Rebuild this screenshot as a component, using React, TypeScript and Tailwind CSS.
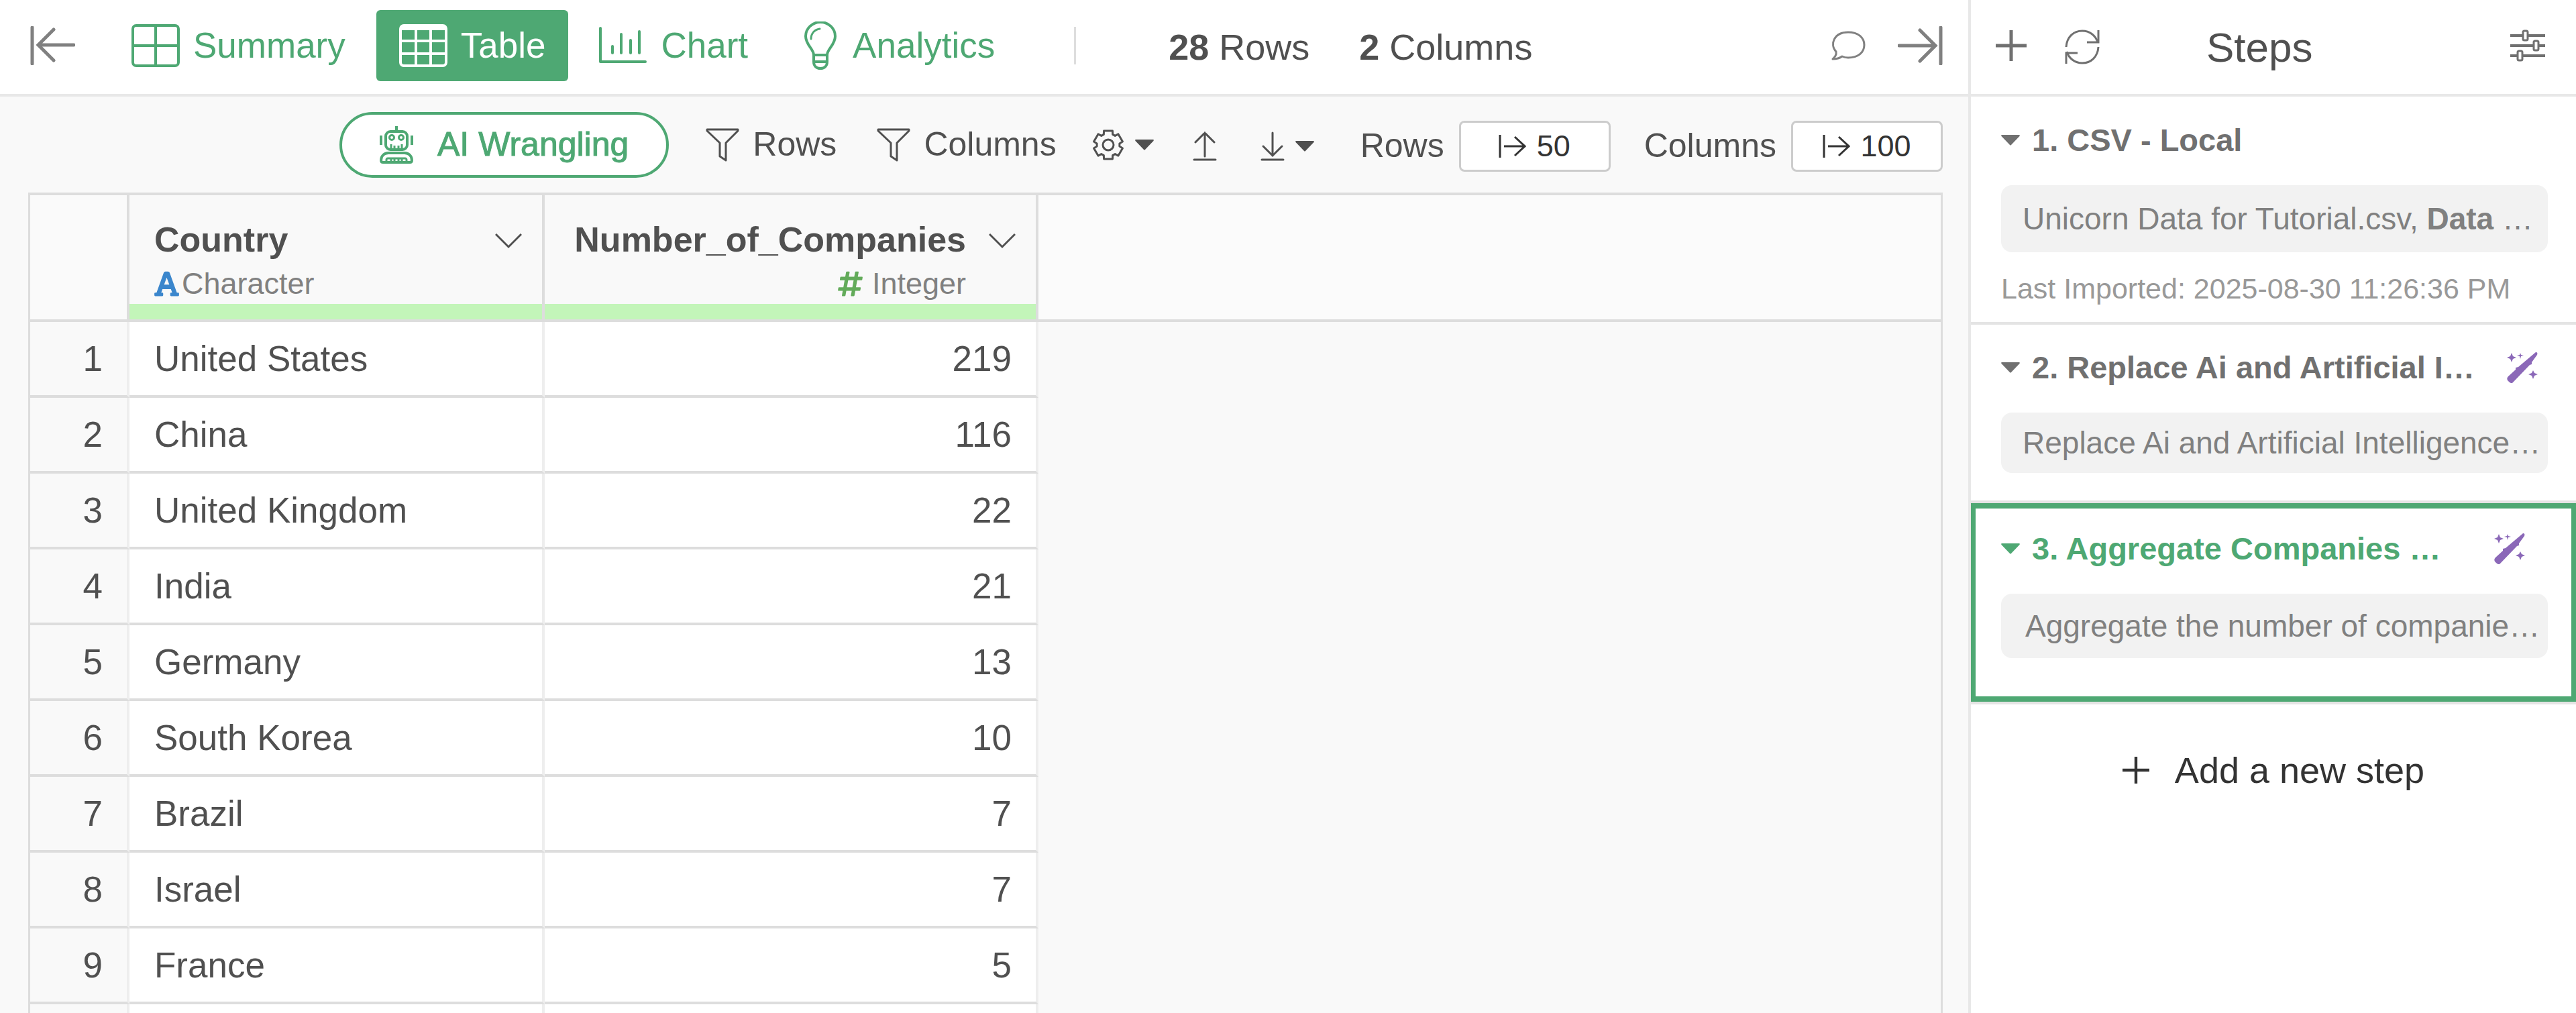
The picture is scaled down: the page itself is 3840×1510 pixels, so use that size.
import React, { useState } from 'react';
import { FaFont, FaHashtag } from 'react-icons/fa';

const rows = [
    { country: 'United States', companies: 219 },
    { country: 'China', companies: 116 },
    { country: 'United Kingdom', companies: 22 },
    { country: 'India', companies: 21 },
    { country: 'Germany', companies: 13 },
    { country: 'South Korea', companies: 10 },
    { country: 'Brazil', companies: 7 },
    { country: 'Israel', companies: 7 },
    { country: 'France', companies: 5 },
];

// six teeth, four corners each
const gearPoints = Array.from({ length: 6 }, (_, i) => i * 60 - 90)
    .flatMap((tooth) => [[-23, 17], [-17, 22], [17, 22], [23, 17]].map(([offset, r]) => {
        const a = ((tooth + offset) * Math.PI) / 180;
        return `${(24 + r * Math.cos(a)).toFixed(2)},${(24 + r * Math.sin(a)).toFixed(2)}`;
    }))
    .join(' ');

const SummaryIcon = () => (
    <svg className="w-[72px] h-[64px]" viewBox="0 0 72 64" fill="none" stroke="currentColor" strokeWidth="4">
        <rect x="2" y="2" width="68" height="60" rx="5" />
        <path d="M36 2v60M2 32h68" />
    </svg>
);

const TableIcon = () => (
    <svg className="w-[72px] h-[64px]" viewBox="0 0 72 64" fill="none" stroke="currentColor" strokeWidth="4">
        <rect x="2" y="2" width="68" height="60" rx="5" />
        <path d="M25 6v56M47 6v56M2 25h68M2 44h68" />
        <path d="M3 5h66" strokeWidth="8" />
    </svg>
);

const ChartIcon = () => (
    <svg className="w-[72px] h-[56px]" viewBox="0 0 72 56" fill="none" stroke="currentColor" strokeWidth="4" strokeLinecap="round">
        <path d="M2 2v50h67" strokeLinejoin="round" />
        <path d="M20 29v10M33 11v28M47 20v19M60 7v32" />
    </svg>
);

const BulbIcon = () => (
    <svg className="w-[56px] h-[72px]" viewBox="0 0 56 72" fill="none" stroke="currentColor" strokeWidth="4" strokeLinejoin="round">
        <path d="M18 50C18 41 6 35 6 22a22 21 0 0 1 44 0c0 13-12 19-12 28z" />
        <path d="M18 50v10c0 6 4 10 10 10s10-4 10-10V50M18 60h20" />
        <path d="M14 26c0-8 5-14 13-15" strokeWidth="3" strokeLinecap="round" />
    </svg>
);

const CollapseLeft = () => (
    <svg className="w-[67px] h-[58px]" viewBox="0 0 67 58" fill="none" stroke="currentColor" strokeWidth="5" strokeLinecap="round">
        <path d="M3 2v54M65 28H12M35 5 12 28l23 23" />
    </svg>
);

const CollapseRight = () => (
    <svg className="w-[67px] h-[58px]" viewBox="0 0 67 58" fill="none" stroke="currentColor" strokeWidth="5" strokeLinecap="round">
        <path d="M64 2v54M2 29h53M33 6l23 23-23 23" />
    </svg>
);

const CommentIcon = () => (
    <svg className="w-[52px] h-[44px]" viewBox="0 0 52 44" fill="none" stroke="currentColor" strokeWidth="3" strokeLinejoin="round">
        <path d="M8 31C-2 20 5 2 26 2c15 0 24 8 24 19s-9 19-24 19c-3 0-6-.5-9-2-4 3-9 4-14 4 3-3 6-6 5-11z" />
    </svg>
);

const RefreshIcon = () => (
    <svg className="w-[52px] h-[52px]" viewBox="0 0 52 52" fill="none" stroke="currentColor" strokeWidth="3">
        <path d="M2 26C3 11 13 2 26 2c11 0 20 7 23 17" />
        <path d="M50 1v18H33" />
        <path d="M50 26C49 41 39 50 26 50 15 50 6 43 3 33" />
        <path d="M2 51V35h17" />
    </svg>
);

const SlidersIcon = () => (
    <svg className="w-[54px] h-[48px]" viewBox="0 0 54 48" fill="none" stroke="currentColor" strokeWidth="3">
        <path d="M1 9h20M26 9h27M1 24h36M42 24h11M1 39h13M19 39h34" strokeWidth="4" />
        <rect x="20" y="2" width="7" height="14" rx="2" fill="white" />
        <rect x="36" y="17" width="7" height="14" rx="2" fill="white" />
        <rect x="12" y="32" width="7" height="14" rx="2" fill="white" />
    </svg>
);

const RobotIcon = () => (
    <svg className="w-[50px] h-[56px]" viewBox="0 0 50 56" fill="none" stroke="currentColor" strokeWidth="4">
        <path d="M25 0v8M2 14v14M48 14v14" />
        <rect x="9" y="8" width="32" height="27" rx="7" />
        <circle cx="18" cy="17" r="3.500" strokeWidth="3" />
        <circle cx="32" cy="17" r="3.500" strokeWidth="3" />
        <path d="M17 27v7M22 29v5M28 29v5M33 27v7" strokeWidth="3" />
        <path d="M2 51c0-6 4-11 11-11h24c7 0 11 5 11 11 0 2-1 3-3 3H5c-2 0-3-1-3-3z" />
        <path d="M10 54v-4c0-1 1-2 2-2h26c1 0 2 1 2 2v4M17 48v6M22 48v6M28 48v6M33 48v6" strokeWidth="3" />
    </svg>
);

const FunnelIcon = () => (
    <svg className="w-[50px] h-[50px]" viewBox="0 0 50 50" fill="none" stroke="currentColor" strokeWidth="3" strokeLinejoin="round">
        <path d="M2 2h46v2L30 22v26l-9-6V22L2 4z" />
    </svg>
);

const GearIcon = () => (
    <svg className="w-[48px] h-[48px]" viewBox="0 0 48 48" fill="none" stroke="currentColor" strokeWidth="3" strokeLinejoin="round">
        <polygon points={gearPoints} />
        <circle cx="24" cy="24" r="8" />
    </svg>
);

const UploadIcon = () => (
    <svg className="w-[36px] h-[44px]" viewBox="0 0 36 44" fill="none" stroke="currentColor" strokeWidth="3" strokeLinecap="round">
        <path d="M18 37V2M4 16 18 2l14 14M2 42h32" />
    </svg>
);

const DownloadIcon = () => (
    <svg className="w-[36px] h-[44px]" viewBox="0 0 36 44" fill="none" stroke="currentColor" strokeWidth="3" strokeLinecap="round">
        <path d="M18 2v34M4 22l14 14 14-14M2 42h32" />
    </svg>
);

const LimitIcon = () => (
    <svg className="w-[41px] h-[34px] shrink-0" viewBox="0 0 41 34" fill="none" stroke="currentColor" strokeWidth="3">
        <path d="M2 0v34M8 17h31M24 3l15 14-15 14" />
    </svg>
);

const Caret = () => (
    <svg className="w-[28px] h-[16px] shrink-0" viewBox="0 0 28 16" fill="currentColor">
        <path d="M1 0h26c1 0 1 1 .5 2L15 15c-.6.7-1.400.7-2 0L.5 2C0 1 0 0 1 0z" />
    </svg>
);

const ChevronIcon = () => (
    <svg className="w-[40px] h-[24px]" viewBox="0 0 40 24" fill="none" stroke="currentColor" strokeWidth="3">
        <path d="M1 2l19 19L39 2" />
    </svg>
);

const PlusIcon = ({ className }: { className: string }) => (
    <svg className={className} viewBox="0 0 46 46" fill="none" stroke="currentColor" strokeWidth="5">
        <path d="M23 0v46M0 23h46" />
    </svg>
);

const WandIcon = () => (
    <svg className="w-[46px] h-[46px]" viewBox="0 0 46 46" fill="#8b68b8">
        <path d="M43 0c2 0 3 1 2 4l-8 11v3l-3 1L9 45c-2 2-4 1-6-1l-2-2c-1-2-1-4 1-6l11-10v-3l4-1z" />
        <path d="M7 1l2 5 5 2-5 2-2 5-2-5-5-2 5-2zM20 1l1 3 4 1-4 1-1 4-1-4-4-1 4-1zM39 27l2 4 5 2-5 2-2 5-2-5-5-2 5-2z" />
    </svg>
);

interface TabProps {
    label: string;
    icon: React.ReactNode;
    active: boolean;
    onClick: () => void;
}

const Tab = ({ label, icon, active, onClick }: TabProps) => (
    <button onClick={onClick} className={`flex items-center gap-5 h-[106px] px-[34px] rounded-md text-[53px] ${active ? 'bg-[#4ea873] text-white' : 'text-[#4ea873]'}`}>
        {icon}
        {label}
    </button>
);

interface LimitProps {
    id: string;
    label: string;
    value: string;
}

const LimitBox = ({ id, label, value }: LimitProps) => (
    <div className="flex items-center gap-[22px]">
        <label htmlFor={id}>{label}</label>
        <div className="flex items-center justify-center gap-4 w-[226px] h-[76px] border-[3px] border-[#cccccc] rounded-lg bg-white text-[45px] text-[#333333]">
            <LimitIcon />
            <input id={id} defaultValue={value} size={1} className={`${value.length > 2 ? 'w-[76px]' : 'w-[51px]'} bg-transparent outline-none`} />
        </div>
    </div>
);

interface StepProps {
    title: string;
    wand?: boolean;
    active?: boolean;
    cardClass: string;
    className: string;
    children: React.ReactNode;
    note?: string;
}

const Step = ({ title, wand, active, cardClass, className, children, note }: StepProps) => (
    <section className={className}>
        <div className={`flex items-center h-14 mb-[39px] text-[47px] font-bold ${active ? 'text-[#4ea873] pr-[34px]' : 'text-[#707070] pr-[15px]'}`}>
            <button aria-label="Toggle step"><Caret /></button>
            <h3 className="ml-[18px] flex-1 truncate">{title}</h3>
            {wand && <button aria-label="AI step"><WandIcon /></button>}
        </div>
        <div className={`flex items-center rounded-2xl bg-[#f2f2f2] text-[46px] text-[#808080] whitespace-nowrap overflow-hidden ${cardClass}`}>
            <p>{children}</p>
        </div>
        {note && <p className="mt-[30px] text-[43px] leading-[48px] text-[#999999] whitespace-nowrap">{note}</p>}
    </section>
);

const App = () => {
    const [tab, setTab] = useState('Table');
    return (
        <div className="flex h-screen overflow-hidden bg-white text-[#505050] font-['Liberation_Sans',Arial,sans-serif]">
            <main className="flex flex-col flex-1 min-w-0">
                <header className="flex items-center h-36 shrink-0 border-b-4 border-[#e8e8e8] pb-1 pl-[45px] pr-[38px]">
                    <button aria-label="Collapse left" className="text-[#808080] mr-[50px]"><CollapseLeft /></button>
                    <nav className="flex gap-3">
                        <Tab label="Summary" icon={<SummaryIcon />} active={tab === 'Summary'} onClick={() => setTab('Summary')} />
                        <Tab label="Table" icon={<TableIcon />} active={tab === 'Table'} onClick={() => setTab('Table')} />
                        <Tab label="Chart" icon={<ChartIcon />} active={tab === 'Chart'} onClick={() => setTab('Chart')} />
                        <Tab label="Analytics" icon={<BulbIcon />} active={tab === 'Analytics'} onClick={() => setTab('Analytics')} />
                    </nav>
                    <div className="w-[3px] h-14 bg-[#dddddd] ml-[84px] mr-[138px]" />
                    <div className="flex gap-[74px] pt-1 text-[54px]">
                        <span><b>28</b> Rows</span>
                        <span><b>2</b> Columns</span>
                    </div>
                    <div className="flex items-center gap-12 ml-auto text-[#808080]">
                        <button aria-label="Comments"><CommentIcon /></button>
                        <button aria-label="Collapse right"><CollapseRight /></button>
                    </div>
                </header>

                <div className="flex flex-col flex-1 min-h-0 bg-[#f9f9f9] pl-[42px] pr-[38px]">
                    <div className="flex items-center justify-end h-[143px] shrink-0 text-[50px]">
                        <button className="flex items-center gap-9 h-[98px] px-14 border-4 border-[#4ea873] rounded-full bg-white text-[#4ea873] [-webkit-text-stroke:1px_#4ea873]">
                            <RobotIcon />
                            AI Wrangling
                        </button>
                        <button className="flex items-center gap-5 ml-[55px]"><FunnelIcon />Rows</button>
                        <button className="flex items-center gap-5 ml-[60px]"><FunnelIcon />Columns</button>
                        <button aria-label="Settings" className="flex items-center gap-4 ml-[53px]"><GearIcon /><Caret /></button>
                        <button aria-label="Upload" className="ml-[58px] pt-1"><UploadIcon /></button>
                        <button aria-label="Download" className="flex items-center gap-4 ml-[65px] pt-1"><DownloadIcon /><Caret /></button>
                        <div className="flex gap-[50px] ml-[69px] pt-1">
                            <LimitBox id="row-limit" label="Rows" value="50" />
                            <LimitBox id="column-limit" label="Columns" value="100" />
                        </div>
                    </div>

                    <div className="flex-1 min-h-0 overflow-hidden border-t-4 border-x-[3px] border-[#dddddd]">
                        <table className="w-full table-fixed border-separate border-spacing-0 text-[53px]">
                            <colgroup>
                                <col className="w-[148px]" />
                                <col className="w-[619px]" />
                                <col className="w-[736px]" />
                                <col />
                            </colgroup>
                            <thead className="text-[52px]">
                                <tr>
                                    <th className="border-r-4 border-b-4 border-[#dddddd] bg-[#fafafa]" />
                                    <th className="p-0 border-r-4 border-b-4 border-[#dddddd] text-left">
                                        <div className="flex justify-between h-[162px] pt-9 pl-[37px] pr-[30px]">
                                            <div>
                                                <div className="leading-[60px]">Country</div>
                                                <div className="flex items-center gap-1 mt-3 h-12 font-normal text-[45px] text-[#808080]">
                                                    <FaFont className="w-[37px] h-[42px] text-[#3b86cc]" />
                                                    Character
                                                </div>
                                            </div>
                                            <button aria-label="Country menu" className="self-start mt-5"><ChevronIcon /></button>
                                        </div>
                                        <div className="h-[23px] bg-[#c3f5b9]" />
                                    </th>
                                    <th className="p-0 border-r-4 border-b-4 border-[#dddddd] text-right">
                                        <div className="flex justify-end gap-[34px] h-[162px] pt-9 pr-[30px]">
                                            <div>
                                                <div className="leading-[60px]">Number_of_Companies</div>
                                                <div className="flex items-center justify-end gap-3.5 mt-3 h-12 font-normal text-[45px] text-[#808080]">
                                                    <FaHashtag className="w-[37px] h-[42px] text-[#63ab5a]" />
                                                    Integer
                                                </div>
                                            </div>
                                            <button aria-label="Number of companies menu" className="self-start mt-5"><ChevronIcon /></button>
                                        </div>
                                        <div className="h-[23px] bg-[#c3f5b9]" />
                                    </th>
                                    <th className="border-b-4 border-[#dddddd] bg-[#fbfbfb]" />
                                </tr>
                            </thead>
                            <tbody>
                                {rows.map((row, i) => (
                                    <tr key={row.country} className="h-[113px]">
                                        <td className="p-0 pr-9 text-right border-b-4 border-r-4 border-b-[#dddddd] border-r-[#eeeeee]">{i + 1}</td>
                                        <td className="p-0 pl-[37px] bg-white border-b-4 border-r-4 border-b-[#dddddd] border-r-[#eeeeee]">{row.country}</td>
                                        <td className="p-0 pr-9 text-right bg-white border-b-4 border-r-4 border-b-[#dddddd] border-r-[#eeeeee]">{row.companies}</td>
                                        <td />
                                    </tr>
                                ))}
                                {/* next row, only its top edge is in view */}
                                <tr className="h-[113px]">
                                    <td className="border-r-4 border-[#eeeeee]" />
                                    <td className="bg-white border-r-4 border-[#eeeeee]" />
                                    <td className="bg-white border-r-4 border-[#eeeeee]" />
                                    <td />
                                </tr>
                            </tbody>
                        </table>
                    </div>
                </div>
            </main>

            <aside className="w-[906px] shrink-0 border-l-4 border-[#e8e8e8]">
                <div className="flex items-center h-36 border-b-4 border-[#e8e8e8] pb-1 pl-[37px] pr-[45px] text-[#707070]">
                    <button aria-label="Add step"><PlusIcon className="w-[46px] h-[46px]" /></button>
                    <button aria-label="Refresh" className="ml-[57px] pt-1"><RefreshIcon /></button>
                    <h2 className="ml-[159px] pt-1 text-[62px] text-[#505050]">Steps</h2>
                    <button aria-label="Step settings" className="ml-auto"><SlidersIcon /></button>
                </div>
                <Step
                    title="1. CSV - Local"
                    className="pt-[37px] pb-[26px] pl-[45px] pr-[42px] border-b-4 border-[#e4e4e4]"
                    cardClass="h-[100px] pl-8"
                    note="Last Imported: 2025-08-30 11:26:36 PM"
                >
                    Unicorn Data for Tutorial.csv, <b>Data</b> …
                </Step>
                <Step
                    title="2. Replace Ai and Artificial I…"
                    wand
                    className="pt-9 pb-[41px] pl-[45px] pr-[42px] border-b-4 border-[#e4e4e4]"
                    cardClass="h-[90px] pl-8"
                >
                    Replace Ai and Artificial Intelligence…
                </Step>
                <div className="border-b-4 border-[#e4e4e4]">
                    <Step
                        title="3. Aggregate Companies …"
                        wand
                        active
                        className="pt-8 pb-[57px] pl-[38px] pr-[35px] border-y-8 border-x-[7px] border-[#4ea873]"
                        cardClass="h-24 pl-9"
                    >
                        Aggregate the number of companie…
                    </Step>
                </div>
                <button className="flex items-center justify-center gap-[38px] w-full mt-[66px] h-16 text-[54px] text-[#333333]">
                    <PlusIcon className="w-10 h-10" />
                    Add a new step
                </button>
            </aside>
        </div>
    );
};
export default App;
